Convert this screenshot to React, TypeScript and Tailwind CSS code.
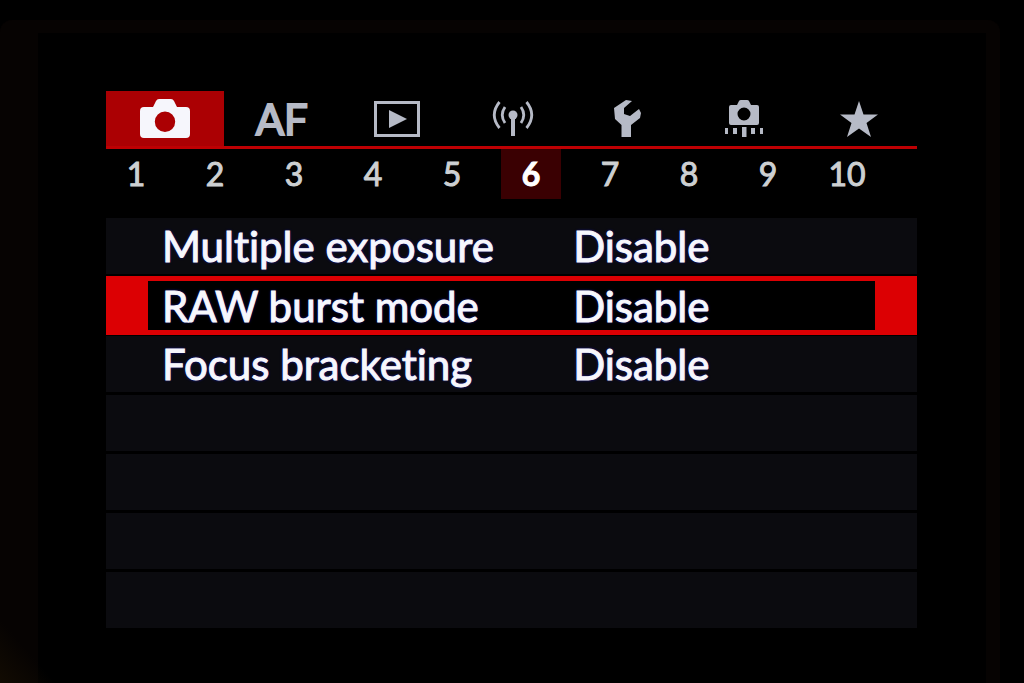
import React, { useState } from 'react';
import clsx from 'clsx';

type Tab = { id: string; label: string; icon: React.ReactNode };
type Setting = { name: string; value: string };

const TABS: Tab[] = [
    {
        id: 'shoot',
        label: 'Shooting',
        icon: (
            <svg width="50" height="40" viewBox="0 0 50 40" fill="currentColor" aria-hidden="true">
                <path fillRule="evenodd" d="M4 8H13L16 2Q17 0 19 0H31Q33 0 34 2L37 8H46Q50 8 50 12V35Q50 39 46 39H4Q0 39 0 35V12Q0 8 4 8ZM25 12.500A10.200 10.200 0 1 0 25 32.900A10.200 10.200 0 1 0 25 12.500Z" />
            </svg>
        ),
    },
    {
        id: 'af',
        label: 'AF',
        icon: <span className="text-[42px] leading-none [-webkit-text-stroke:2px_currentColor]">AF</span>,
    },
    {
        id: 'playback',
        label: 'Playback',
        icon: (
            <svg width="46" height="36" viewBox="0 0 46 36" aria-hidden="true">
                <rect x="1.500" y="1.500" width="43" height="33" fill="none" stroke="currentColor" strokeWidth="3" />
                <path d="M15 9L33 18L15 27Z" fill="currentColor" />
            </svg>
        ),
    },
    {
        id: 'wireless',
        label: 'Wireless',
        icon: (
            <svg width="42" height="36" viewBox="0 0 42 36" fill="none" stroke="currentColor" strokeWidth="2.800" aria-hidden="true">
                <circle cx="21" cy="14" r="4.500" fill="currentColor" stroke="none" />
                <path d="M21 14V35" strokeWidth="4" />
                <path d="M13 6Q7.500 14 13 22M29 6Q34.500 14 29 22" />
                <path d="M7.500 1Q-3 14 7.500 27M34.500 1Q45 14 34.500 27" />
            </svg>
        ),
    },
    {
        id: 'setup',
        label: 'Set-up',
        icon: (
            <svg width="28" height="38" viewBox="0 0 28 38" fill="currentColor" aria-hidden="true">
                <path d="M12 0L18 1L10 8V14L16 16L25 9L27 13L26 18L17 25V37H7.500V25L1 19L0 8Z" />
            </svg>
        ),
    },
    {
        id: 'custom',
        label: 'Custom functions',
        icon: (
            <svg width="40" height="38" viewBox="0 0 40 38" fill="currentColor" aria-hidden="true">
                <path fillRule="evenodd" d="M7 5H13L15 1Q15.500 0 17 0H23Q24.500 0 25 1L27 5H33Q35 5 35 7V23Q35 25 33 25H7Q5 25 5 23V7Q5 5 7 5ZM20 7.500A6.500 6.500 0 1 0 20 20.500A6.500 6.500 0 1 0 20 7.500Z" />
                <path d="M1 28H4V34H1ZM9 28H13V34H9ZM18 27H22.500V37H18ZM27 28H31V34H27ZM36 28H39V34H36Z" />
            </svg>
        ),
    },
    {
        id: 'mymenu',
        label: 'My menu',
        icon: (
            <svg width="38" height="36" viewBox="0 0 38 36" fill="currentColor" aria-hidden="true">
                <path d="M19 0L23.500 13.500H38L26.500 22L31 36L19 27.500L7 36L11.500 22L0 13.500H14.500Z" />
            </svg>
        ),
    },
];

const PAGES = [1, 2, 3, 4, 5, 6, 7, 8, 9, 10];

const SETTINGS: Setting[] = [
    { name: 'Multiple exposure', value: 'Disable' },
    { name: 'RAW burst mode', value: 'Disable' },
    { name: 'Focus bracketing', value: 'Disable' },
];

const ROW_COUNT = 7;

export default function App() {
    const [tab, setTab] = useState('shoot');
    const [page, setPage] = useState(6);
    const [selected, setSelected] = useState(1);

    const emptyRows = Array.from({ length: ROW_COUNT - SETTINGS.length });

    return (
        <div className="relative flex min-h-screen flex-col bg-black pt-[20px] pr-[24px] font-['Lato',sans-serif] [font-variant-ligatures:none]">
            {/* Body of the camera around the display */}
            <div className="flex-1 rounded-t-xl border-t-[13px] border-r-[14px] border-l-[38px] border-[#060302] bg-black">
                <main className="pt-[58px] pr-[69px] pb-12 pl-[68px]">
                    <nav
                        aria-label="Menu tabs"
                        className="grid h-[58px] grid-cols-[118px_repeat(6,1fr)] border-b-[3px] border-[#be0003]"
                    >
                        {TABS.map((item) => (
                            <button
                                key={item.id}
                                aria-label={item.label}
                                onClick={() => setTab(item.id)}
                                className={clsx(
                                    'flex items-center justify-center',
                                    tab === item.id ? 'bg-[#ab0003] text-[#f6f6fc]' : 'text-[#b6bac6]'
                                )}
                            >
                                {item.icon}
                            </button>
                        ))}
                    </nav>

                    <nav aria-label="Pages" className="flex justify-between pr-10">
                        {PAGES.map((n) => (
                            <button
                                key={n}
                                onClick={() => setPage(n)}
                                className={clsx(
                                    'h-[50px] w-[60px] text-[32px] leading-[50px] [-webkit-text-stroke:1px_currentColor]',
                                    page === n ? 'bg-[#3a0002] font-bold text-white' : 'text-[#cdd0d2]'
                                )}
                            >
                                {n}
                            </button>
                        ))}
                    </nav>

                    <ul className="mt-[18px]">
                        {SETTINGS.map((s, i) => (
                            <li key={s.name}>
                                <button
                                    onClick={() => setSelected(i)}
                                    className={clsx(
                                        'grid h-[59px] w-full grid-cols-[10fr_7fr] items-center text-left text-[42px] leading-none whitespace-nowrap text-[#f7f7fc] [-webkit-text-stroke:1px_currentColor] [text-shadow:0_0_3px_#1a1ad0]',
                                        selected === i
                                            ? 'border-x-[42px] border-y-[5px] border-[#dc0003] bg-black px-[14px]'
                                            : 'border-t border-b-2 border-black bg-[#0b0b0f] px-[56px]'
                                    )}
                                >
                                    <span>{s.name}</span>
                                    <span>{s.value}</span>
                                </button>
                            </li>
                        ))}
                        {emptyRows.map((_, i) => (
                            <li key={i} className="h-[59px] border-t border-b-2 border-black bg-[#0b0b0f]" />
                        ))}
                    </ul>
                </main>
            </div>
            <div className="absolute bottom-0 left-0 h-16 w-14 bg-linear-to-tr from-[#120b02] to-transparent to-50%" />
        </div>
    );
}
